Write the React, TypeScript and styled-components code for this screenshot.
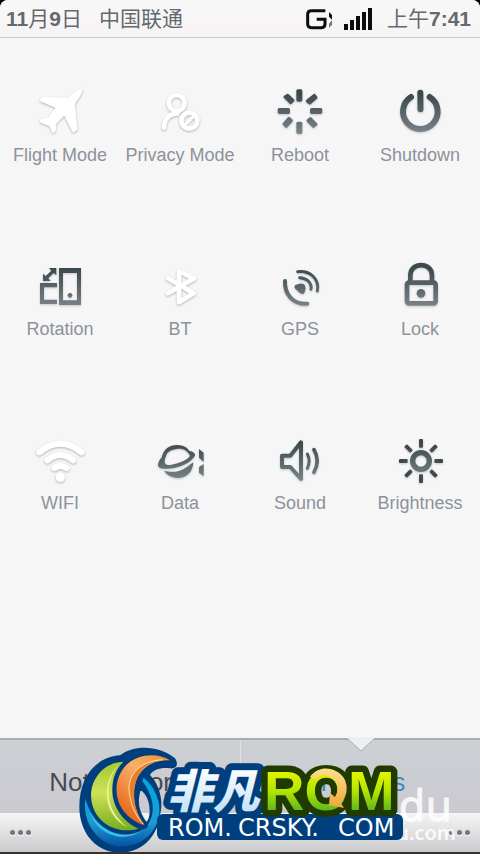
import React from "react";
import styled, { createGlobalStyle } from "styled-components";

const Global = createGlobalStyle`
  *, *::before, *::after { box-sizing: border-box; }
  html, body { margin: 0; padding: 0; background: #000; }
  body { font-family: "Liberation Sans", "Noto Sans CJK SC", sans-serif; }
`;

const Screen = styled.main`
  position: relative;
  display: flex;
  flex-direction: column;
  min-height: 100vh;
  background: #f6f6f6;
  border-bottom: 2px solid #333;
  border-radius: 8px 8px 0 0;
  overflow: hidden;
`;

const StatusBar = styled.header`
  display: flex;
  align-items: center;
  height: 38px;
  padding: 0 9px 0 6px;
  border-bottom: 1px solid #c9c8ca;
  background: linear-gradient(#f8f8f9, #f7f3f5);
  color: #63696f;
  font-size: 21px;
  line-height: 24px;
`;

const StatusText = styled.span<{ $gap?: number }>`
  margin-left: ${(p) => p.$gap ?? 0}px;
  white-space: nowrap;
  b { font-weight: 700; }
`;

const Indicators = styled.div`
  display: flex;
  align-items: center;
  gap: 10px;
  margin-left: auto;
  svg { display: block; }
`;

const Tiles = styled.section`
  flex: 1;
  display: grid;
  grid-template-columns: repeat(4, 1fr);
  grid-auto-rows: 174px;
  padding-top: 49px;
`;

const Tile = styled.button`
  display: flex;
  flex-direction: column;
  align-items: center;
  align-self: start;
  gap: 8px;
  padding: 0;
  border: 0;
  background: none;
  color: #8d929b;
  font-family: inherit;
  font-size: 18px;
  line-height: 24px;
  white-space: nowrap;
`;

const Glyph = styled.svg<{ $off?: boolean }>`
  display: block;
  width: 48px;
  height: 48px;
  overflow: visible;
  filter: ${(p) =>
    p.$off
      ? "drop-shadow(0 1px 1px rgba(0,0,0,.28))"
      : "drop-shadow(0 1px 1px rgba(80,95,100,.3))"};
`;

const TabBar = styled.nav`
  display: grid;
  grid-template-columns: 1fr 1fr;
  height: 75px;
  border-top: 2px solid #a9adb1;
  background: linear-gradient(#ccd0d3, #cbcad1);
`;

const Tab = styled.button<{ $active?: boolean }>`
  position: relative;
  padding: 10px 0 0;
  border: 0;
  border-left: ${(p) => (p.$active ? "1px solid #dfe1e4" : "0")};
  background: none;
  color: ${(p) => (p.$active ? "#3a8cb8" : "#454b55")};
  font-family: inherit;
  font-size: 26px;
  line-height: 30px;
`;

const Notch = styled.svg`
  position: absolute;
  top: -3px;
  left: 50%;
  margin-left: -13px;
`;

const Footer = styled.footer`
  display: flex;
  align-items: center;
  justify-content: space-between;
  height: 39px;
  padding: 0 10px;
  background: linear-gradient(#f5f5f6, #cbcbcd);
`;

const More = styled.button`
  display: flex;
  gap: 3px;
  padding: 0;
  border: 0;
  background: none;
`;

const Dot = styled.i`
  width: 5px;
  height: 5px;
  border-radius: 50%;
  background: #74757a;
  box-shadow: 0 1px 1px #fff;
`;

const Brand = styled.svg`
  position: absolute;
  left: 50%;
  bottom: -2px;
  width: 384px;
  height: 112px;
  margin-left: -164px;
  pointer-events: none;
`;

type IconProps = { paint: string };
type Item = {
  name: string;
  box: [number, number];
  off?: boolean;
  draw: (p: IconProps) => React.ReactNode;
};

const spokes = (n: number, el: (angle: number) => React.ReactNode) =>
  Array.from({ length: n }, (_, i) => el((i * 360) / n));

const items: Item[] = [
  {
    name: "Flight Mode", box: [108, 36], off: true,
    draw: ({ paint }) => (
      <path fill={paint} stroke={paint} strokeWidth="3" strokeLinejoin="round"
        d="M248 41L228 49L203 70L126 67L120 77L169 98L146 128L122 134L121 141L149 152L159 174L166 167L166 148L193 120L220 172L231 163L223 87L240 62Z" />
    ),
  },
  {
    name: "Privacy Mode", box: [468, 36], off: true,
    draw: ({ paint }) => (
      <g fill="none" stroke={paint} strokeWidth="14" strokeLinecap="round">
        <circle cx="530" cy="84" r="24" />
        <path d="M492 158C492 134 507 116 532 115" />
        <circle cx="568" cy="137" r="24" />
        <path strokeWidth="9" d="M554 151L582 123" />
      </g>
    ),
  },
  {
    name: "Reboot", box: [108, 36],
    draw: ({ paint }) => (
      <g fill={paint}>
        <rect x="169" y="43" width="18" height="37" rx="5" />
        <rect x="169" y="140" width="18" height="37" rx="5" />
        <rect x="113" y="99" width="37" height="18" rx="5" />
        <rect x="210" y="99" width="37" height="18" rx="5" />
        <path stroke={paint} strokeWidth="9" strokeLinejoin="round"
          d="M135 66L143 61L159 76L152 83ZM223 61L228 68L209 84L202 78ZM147 130L154 137L139 154L132 147ZM211 131L204 137L220 154L228 148Z" />
      </g>
    ),
  },
  {
    name: "Shutdown", box: [468, 36],
    draw: ({ paint }) => (
      <g fill="none" stroke={paint} strokeWidth="18" strokeLinecap="round">
        <path d="M513 66A52 52 0 1 0 569 66" />
        <path d="M541 53L541.5 103" />
      </g>
    ),
  },
  {
    name: "Rotation", box: [108, 33],
    draw: ({ paint }) => (
      <g fill={paint}>
        <path fillRule="evenodd" d="M177 54H243V165H177ZM189 69V151H231V69ZM120 99H171V112H132V149H171V162H120Z" />
        <circle cx="210" cy="136" r="7" />
        <path d="M147 54H169V76L161 69L145 85L152 93H129V71L137 78L154 62Z" />
      </g>
    ),
  },
  {
    name: "BT", box: [468, 33], off: true,
    draw: ({ paint }) => (
      <path fill="none" stroke={paint} strokeWidth="14" strokeLinejoin="round" strokeLinecap="round"
        d="M504 85L581 130L537 157V63L581 86L504 130" />
    ),
  },
  {
    name: "GPS", box: [108, 33],
    draw: ({ paint }) => (
      <g fill="none" stroke={paint} strokeLinecap="round">
        <path strokeWidth="12" d="M135 93C133 132 158 164 202 161" />
        <path strokeWidth="9" d="M179 83C201 84 216 99 213 118M173 65C212 61 239 88 232 123" />
        <path fill={paint} strokeWidth="3" strokeLinejoin="round" d="M166 107Q183 98 193 105Q199 115 191 130Q181 131 177 125Q172 120 166 115Q163 111 166 107Z" />
      </g>
    ),
  },
  {
    name: "Lock", box: [468, 33],
    draw: ({ paint }) => (
      <g fill="none" stroke={paint} strokeWidth="14">
        <rect x="501" y="98" width="86" height="62" rx="6" />
        <path d="M511 96V76C511 35 576 35 576 76V96" />
        <circle cx="543" cy="130" r="13" fill={paint} stroke="none" />
      </g>
    ),
  },
  {
    name: "WIFI", box: [108, 30], off: true,
    draw: ({ paint }) => (
      <g fill="none" stroke={paint} strokeWidth="18" strokeLinecap="round">
        <path d="M118 82Q181 30 245 82" />
        <path d="M142 106Q181 74 220 106" />
        <path d="M163 129Q181 116 200 129" />
        <circle cx="181" cy="157" r="14" fill={paint} stroke="none" />
      </g>
    ),
  },
  {
    name: "Data", box: [468, 30],
    draw: ({ paint }) => (
      <g fill={paint}>
        <path fillRule="evenodd" d="M485 97C492 66 519 54 550 63Q561 67 568 77C586 82 590 89 580 99C562 120 526 133 490 131Q472 130 474 116Q476 106 485 97ZM498 93C489 116 495 123 515 119C538 115 564 104 570 93C564 77 549 69 529 72C511 75 502 81 498 93Z" />
        <path d="M492 138C507 141 519 140 528 140C549 136 563 125 580 112C578 143 560 158 536 159Q508 160 492 138Z" />
        <path d="M597 72L611 83V111L597 98ZM611 117L597 126V143L611 154Z" />
      </g>
    ),
  },
  {
    name: "Sound", box: [108, 30],
    draw: ({ paint }) => (
      <g fill="none" stroke={paint} strokeWidth="12" strokeLinecap="round" strokeLinejoin="round">
        <path d="M126 92H151L183 52V162L151 126H126Z" />
        <path strokeWidth="9" d="M202 87Q213 108 202 130" />
        <path strokeWidth="11" d="M222 74Q241 108 222 142" />
      </g>
    ),
  },
  {
    name: "Brightness", box: [468, 30],
    draw: ({ paint }) => (
      <g fill={paint}>
        <circle cx="543" cy="108" r="25" fill="none" stroke={paint} strokeWidth="16" />
        {spokes(8, (angle) => (
          <rect key={angle} x="537" y="42" width="12" height="26" rx="3" transform={`rotate(${angle} 543 108)`} />
        ))}
      </g>
    ),
  },
];

function TileIcon({ item }: { item: Item }) {
  const [x, y] = item.box;
  const id = "shade-" + item.name.replace(" ", "-").toLowerCase();
  return (
    <Glyph viewBox={`${x} ${y} 144 144`} $off={item.off} aria-hidden="true">
      <defs>
        <linearGradient id={id} gradientUnits="userSpaceOnUse" x1="0" x2="0" y1={y + 20} y2={y + 140}>
          <stop offset="0" stopColor="#3c484c" />
          <stop offset="1" stopColor="#7b858b" />
        </linearGradient>
      </defs>
      {item.draw({ paint: item.off ? "#fff" : `url(#${id})` })}
    </Glyph>
  );
}

function MoreDots({ label }: { label: string }) {
  return (
    <More aria-label={label}>
      <Dot /><Dot /><Dot />
    </More>
  );
}

function BrandMark() {
  return (
    <Brand viewBox="76 742 384 112" aria-hidden="true">
      <defs>
        <linearGradient id="ice" x1="0" y1="0" x2="0" y2="1">
          <stop offset=".2" stopColor="#fff" /><stop offset="1" stopColor="#b6dcf5" />
        </linearGradient>
        <linearGradient id="lime" gradientUnits="userSpaceOnUse" x1="0" y1="770" x2="0" y2="811">
          <stop offset="0" stopColor="#e8f500" /><stop offset=".5" stopColor="#b5e600" /><stop offset="1" stopColor="#5eb51e" />
        </linearGradient>
        <linearGradient id="gold" x1="0" y1="0" x2="0" y2="1">
          <stop offset="0" stopColor="#ffe08a" /><stop offset="1" stopColor="#eda63a" />
        </linearGradient>
        <linearGradient id="leaf" x1="0" y1="0" x2="0" y2="1">
          <stop offset="0" stopColor="#9fc931" /><stop offset=".45" stopColor="#cfe257" /><stop offset="1" stopColor="#78ac20" />
        </linearGradient>
        <linearGradient id="flame" x1="1" y1="0" x2=".4" y2="1">
          <stop offset="0" stopColor="#ef8c31" /><stop offset=".4" stopColor="#fbb068" /><stop offset="1" stopColor="#e6681c" />
        </linearGradient>
        <linearGradient id="sea" x1="0" y1="0" x2="0" y2="1">
          <stop offset="0" stopColor="#00a9df" /><stop offset=".65" stopColor="#1c9bd3" /><stop offset="1" stopColor="#0752a5" />
        </linearGradient>
      </defs>

      <g fill="#fff" fillOpacity=".85" textAnchor="end">
        <text x="452" y="821" fontFamily="DejaVu Sans, sans-serif" fontSize="42" stroke="#fff" strokeOpacity=".7">du</text>
        <text x="456" y="840" fontFamily="Noto Sans, sans-serif" fontWeight="600" fontSize="20">u.com</text>
      </g>

      <g transform="translate(70 740) scale(.3333)">
        <path fill="#003f7d" fillRule="evenodd" d="M28 200C28 120 70 52 150 46C190 13 270 15 315 55C327 75 320 87 300 85C270 82 250 90 240 105C265 130 280 175 272 215C265 290 215 338 150 338C80 338 28 280 28 200ZM212 150C203 180 205 210 222 245Q235 249 238 224C242 195 232 164 212 150Z" />
        <path fill="url(#sea)" d="M46 176C36 252 88 319 156 319C236 319 282 246 265 183Q253 138 221 113L217 124C249 165 259 214 236 250C200 305 82 300 46 176Z" />
        <path fill="#35c5e8" d="M60 218C82 288 184 326 244 244C207 304 105 298 60 218Z" />
        <path fill="url(#leaf)" stroke="#003f7d" strokeWidth="12" paintOrder="stroke" d="M160 65C92 67 50 134 67 195C83 252 143 284 206 266C162 248 126 200 127 150C127 112 140 86 160 65Z" />
        <path fill="#eaf39b" d="M146 72C92 130 99 224 172 262C110 213 96 139 146 72Z" />
        <path fill="url(#flame)" stroke="#003f7d" strokeWidth="20" strokeLinejoin="round" paintOrder="stroke" d="M300 61C257 35 192 43 161 84C119 140 138 228 224 256C193 216 185 164 199 121C213 83 250 59 300 61Z" />
        <path fill="#ec7e29" d="M278 60C201 64 166 114 180 170C186 205 200 230 220 252C193 211 184 161 199 121C211 83 239 65 278 60Z" />
        <path fill="none" stroke="#ffe0ad" strokeWidth="3" d="M278 59C201 64 166 114 180 170C186 205 200 230 220 252" />
      </g>

      <g strokeLinejoin="round">
        <rect x="157" y="814" width="246" height="26" rx="6" fill="#003f7d" />
        <text x="167" y="808" fontFamily="Noto Sans CJK SC, sans-serif" fontWeight="900" fontStyle="italic" fontSize="46" fill="url(#ice)" stroke="#003f7d" strokeWidth="14" paintOrder="stroke">非凡</text>
        <text x="264" y="810" fontFamily="Liberation Sans, sans-serif" fontWeight="700" fontSize="56" fill="url(#lime)" stroke="#203b00" strokeWidth="13" paintOrder="stroke">ROM</text>
        <path fill="url(#gold)" d="M310 777C319 764 338 767 345 780Q350 792 341 803L344 808L329 805L330 793L335 797Q340 788 335 781C329 773 321 774 316 779Z" />
        <rect x="160" y="817" width="240" height="22" rx="4" fill="#003f7d" />
        <text y="836" fontFamily="DejaVu Sans, sans-serif" fontSize="24" fill="#fff">
          <tspan x="168">ROM.</tspan><tspan x="238">CRSKY.</tspan><tspan x="338">COM</tspan>
        </text>
      </g>
    </Brand>
  );
}

export default function App() {
  return (
    <>
      <Global />
      <Screen>
        <StatusBar>
          <StatusText><b>11</b>月<b>9</b>日</StatusText>
          <StatusText $gap={17}>中国联通</StatusText>
          <Indicators>
            <svg width="28" height="22" viewBox="200 27 84 66" aria-label="GPRS">
              <path d="M258 35H216Q205 35 205 46V76Q205 86 216 86H247Q257 86 257 76V61H232" fill="none" stroke="#0c0c0c" strokeWidth="9" />
              <path d="M269 39L278 48V62L269 53Z" fill="#111" /><path d="M278 64V77L269 87V74Z" fill="#777" />
            </svg>
            <svg width="28" height="22" viewBox="0 0 28 22" fill="#0c0c0c" aria-label="Signal">
              <path d="M0 16h4v6H0ZM6 12h4v10H6ZM12 8h4v14h-4ZM18 4h4v18h-4ZM24 0h4v22h-4Z" />
            </svg>
          </Indicators>
          <StatusText $gap={15}>上午<b>7:41</b></StatusText>
        </StatusBar>
        <Tiles>
          {items.map((item) => (
            <Tile key={item.name}>
              <TileIcon item={item} />
              {item.name}
            </Tile>
          ))}
        </Tiles>
        <TabBar>
          <Tab>Notifications</Tab>
          <Tab $active>
            <Notch width="26" height="16" viewBox="0 0 26 16" aria-hidden="true">
              <path d="M0 0H26V2L13 14L0 2Z" fill="#eceef0" />
              <path d="M0 2L13 14L26 2" fill="none" stroke="#a9adb1" />
            </Notch>
            Toggles
          </Tab>
        </TabBar>
        <Footer>
          <MoreDots label="More" />
          <MoreDots label="Options" />
        </Footer>
        <BrandMark />
      </Screen>
    </>
  );
}
